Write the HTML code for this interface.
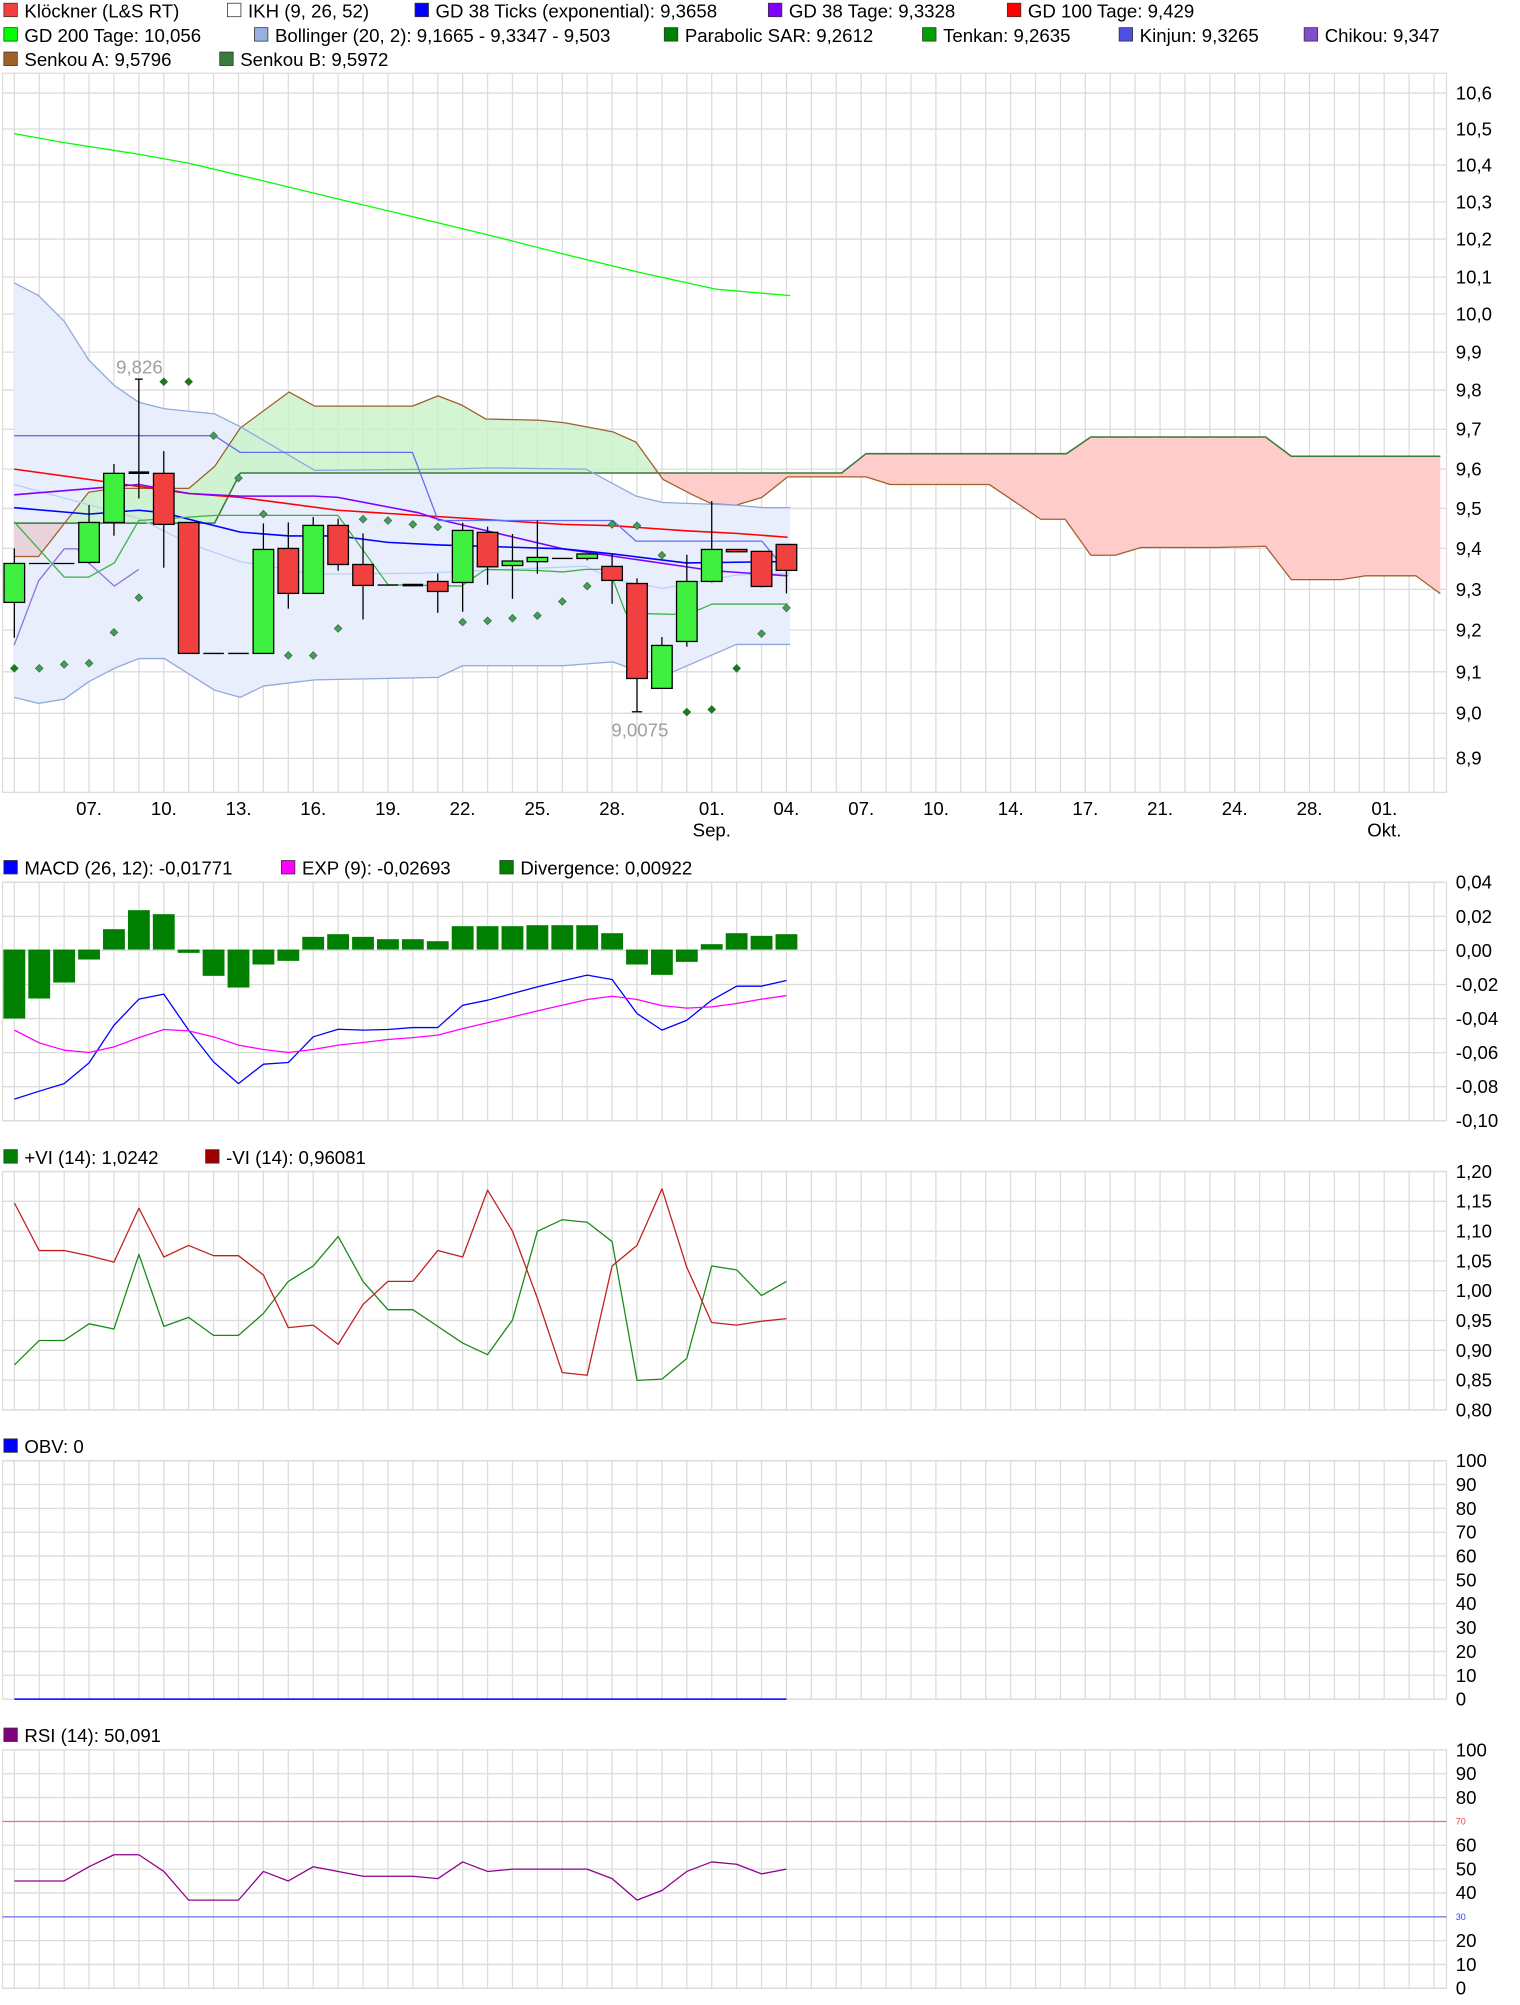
<!DOCTYPE html>
<html><head><meta charset="utf-8"><style>
html,body{margin:0;padding:0;background:#fff;}
svg{display:block;}
text{font-family:"Liberation Sans",sans-serif;font-size:14.5px;fill:#000;}
</style></head><body>
<svg id="s" xmlns="http://www.w3.org/2000/svg" width="1520" height="2005" viewBox="0 0 1183 1560" preserveAspectRatio="none">
<g id="grid"></g>
<g id="draw"></g>
<g id="txt">
<rect x="3" y="2.5" width="10.5" height="10.5" fill="#f04040" stroke="#333" stroke-width=".6"/><text x="19" y="13.5">Klöckner (L&amp;S RT)</text>
<rect x="177" y="2.5" width="10.5" height="10.5" fill="#fff" stroke="#333" stroke-width=".6"/><text x="193" y="13.5">IKH (9, 26, 52)</text>
<rect x="323" y="2.5" width="10.5" height="10.5" fill="#0000ff" stroke="#333" stroke-width=".6"/><text x="339" y="13.5">GD 38 Ticks (exponential): 9,3658</text>
<rect x="598" y="2.5" width="10.5" height="10.5" fill="#8000ff" stroke="#333" stroke-width=".6"/><text x="614" y="13.5">GD 38 Tage: 9,3328</text>
<rect x="784" y="2.5" width="10.5" height="10.5" fill="#ff0000" stroke="#333" stroke-width=".6"/><text x="800" y="13.5">GD 100 Tage: 9,429</text>
<rect x="3" y="21.5" width="10.5" height="10.5" fill="#00ff00" stroke="#333" stroke-width=".6"/><text x="19" y="32.5">GD 200 Tage: 10,056</text>
<rect x="198" y="21.5" width="10.5" height="10.5" fill="#98b0e0" stroke="#333" stroke-width=".6"/><text x="214" y="32.5">Bollinger (20, 2): 9,1665 - 9,3347 - 9,503</text>
<rect x="517" y="21.5" width="10.5" height="10.5" fill="#008000" stroke="#333" stroke-width=".6"/><text x="533" y="32.5">Parabolic SAR: 9,2612</text>
<rect x="718" y="21.5" width="10.5" height="10.5" fill="#00a000" stroke="#333" stroke-width=".6"/><text x="734" y="32.5">Tenkan: 9,2635</text>
<rect x="871" y="21.5" width="10.5" height="10.5" fill="#5050e0" stroke="#333" stroke-width=".6"/><text x="887" y="32.5">Kinjun: 9,3265</text>
<rect x="1015" y="21.5" width="10.5" height="10.5" fill="#8050c8" stroke="#333" stroke-width=".6"/><text x="1031" y="32.5">Chikou: 9,347</text>
<rect x="3" y="40.5" width="10.5" height="10.5" fill="#a0602a" stroke="#333" stroke-width=".6"/><text x="19" y="51.5">Senkou A: 9,5796</text>
<rect x="171" y="40.5" width="10.5" height="10.5" fill="#3a7a3a" stroke="#333" stroke-width=".6"/><text x="187" y="51.5">Senkou B: 9,5972</text>

<rect x="3" y="669.5" width="10.5" height="10.5" fill="#0000ff" stroke="#333" stroke-width=".6"/><text x="19" y="680.5">MACD (26, 12): -0,01771</text>
<rect x="219" y="669.5" width="10.5" height="10.5" fill="#ff00ff" stroke="#333" stroke-width=".6"/><text x="235" y="680.5">EXP (9): -0,02693</text>
<rect x="389" y="669.5" width="10.5" height="10.5" fill="#008000" stroke="#333" stroke-width=".6"/><text x="405" y="680.5">Divergence: 0,00922</text>

<rect x="3" y="894.5" width="10.5" height="10.5" fill="#008000" stroke="#333" stroke-width=".6"/><text x="19" y="905.5">+VI (14): 1,0242</text>
<rect x="160" y="894.5" width="10.5" height="10.5" fill="#a00000" stroke="#333" stroke-width=".6"/><text x="176" y="905.5">-VI (14): 0,96081</text>

<rect x="3" y="1119.5" width="10.5" height="10.5" fill="#0000ff" stroke="#333" stroke-width=".6"/><text x="19" y="1130.5">OBV: 0</text>
<rect x="3" y="1344.5" width="10.5" height="10.5" fill="#800080" stroke="#333" stroke-width=".6"/><text x="19" y="1355.5">RSI (14): 50,091</text>

<g>
<text x="1133" y="77.5">10,6</text><text x="1133" y="105.5">10,5</text><text x="1133" y="133.5">10,4</text><text x="1133" y="162.3">10,3</text><text x="1133" y="191">10,2</text><text x="1133" y="220.7">10,1</text><text x="1133" y="249.5">10,0</text><text x="1133" y="279">9,9</text><text x="1133" y="308.6">9,8</text><text x="1133" y="339">9,7</text><text x="1133" y="370">9,6</text><text x="1133" y="400.7">9,5</text><text x="1133" y="431.8">9,4</text><text x="1133" y="463.7">9,3</text><text x="1133" y="495.4">9,2</text><text x="1133" y="527.8">9,1</text><text x="1133" y="560">9,0</text><text x="1133" y="595">8,9</text>
</g>
<g text-anchor="middle">
<text x="69.3" y="634">07.</text><text x="127.5" y="634">10.</text><text x="185.7" y="634">13.</text><text x="243.8" y="634">16.</text><text x="302" y="634">19.</text><text x="360" y="634">22.</text><text x="418.3" y="634">25.</text><text x="476.5" y="634">28.</text><text x="554" y="634">01.</text><text x="554" y="651">Sep.</text><text x="612" y="634">04.</text><text x="670.3" y="634">07.</text><text x="728.5" y="634">10.</text><text x="786.6" y="634">14.</text><text x="844.7" y="634">17.</text><text x="902.9" y="634">21.</text><text x="961" y="634">24.</text><text x="1019.2" y="634">28.</text><text x="1077.4" y="634">01.</text><text x="1077.4" y="651">Okt.</text>
</g>
<g>
<text x="1133" y="691.5">0,04</text><text x="1133" y="718">0,02</text><text x="1133" y="744.5">0,00</text><text x="1133" y="771">-0,02</text><text x="1133" y="797.5">-0,04</text><text x="1133" y="824">-0,06</text><text x="1133" y="850.5">-0,08</text><text x="1133" y="877">-0,10</text>
</g>
<g>
<text x="1133" y="916.5">1,20</text><text x="1133" y="939.7">1,15</text><text x="1133" y="962.9">1,10</text><text x="1133" y="986.1">1,05</text><text x="1133" y="1009.3">1,00</text><text x="1133" y="1032.5">0,95</text><text x="1133" y="1055.7">0,90</text><text x="1133" y="1078.9">0,85</text><text x="1133" y="1102">0,80</text>
</g>
<g>
<text x="1133" y="1141.5">100</text><text x="1133" y="1160">90</text><text x="1133" y="1178.6">80</text><text x="1133" y="1197.2">70</text><text x="1133" y="1215.7">60</text><text x="1133" y="1234.2">50</text><text x="1133" y="1252.8">40</text><text x="1133" y="1271.4">30</text><text x="1133" y="1290">20</text><text x="1133" y="1308.5">10</text><text x="1133" y="1327">0</text>
</g>
<g>
<text x="1133" y="1366.5">100</text><text x="1133" y="1385">90</text><text x="1133" y="1403.6">80</text><text x="1133" y="1440.7">60</text><text x="1133" y="1459.2">50</text><text x="1133" y="1477.7">40</text><text x="1133" y="1514.9">20</text><text x="1133" y="1533.4">10</text><text x="1133" y="1552">0</text>
<text x="1133" y="1419.5" style="font-size:7px;fill:#f04040">70</text>
<text x="1133" y="1494" style="font-size:7px;fill:#4040f0">30</text>
</g>
</g>
</svg>
<script>
(function(){
var NS="http://www.w3.org/2000/svg";
var G=document.getElementById("grid"),D=document.getElementById("draw");
function el(p,tag,a){var e=document.createElementNS(NS,tag);for(var k in a)e.setAttribute(k,a[k]);p.appendChild(e);return e;}
function X(i){return 11.15+19.385*i;}
var L=2,R=1125.8;
function panel(top,bot,hl){
  for(var i=0;i<=57;i++){var x=X(i);if(x<R)el(G,"line",{x1:x,x2:x,y1:top,y2:bot,stroke:"#dcdcdc","stroke-width":1});}
  hl.forEach(function(y){el(G,"line",{x1:L,x2:R,y1:y,y2:y,stroke:"#dcdcdc","stroke-width":1});});
  el(G,"rect",{x:L,y:top,width:R-L,height:bot-top,fill:"none",stroke:"#dcdcdc","stroke-width":1});
}
function even(top,bot,n){var a=[];for(var k=0;k<n;k++)a.push(top+(bot-top)*k/(n-1));return a;}
panel(57,616.5,[72.4,100.4,128.4,157.2,186,215.6,244.4,274,303.5,334,365,395.6,426.7,458.6,490.3,522.7,555,590]);
panel(686.5,872,even(686.5,872,8));
panel(911.5,1097,even(911.5,1097,9));
panel(1136.5,1322,even(1136.5,1322,11));
panel(1361.5,1547,even(1361.5,1547,11));
function pts(a){return a.map(function(p){return p[0].toFixed(1)+","+p[1].toFixed(1);}).join(" ");}
function idx(a){return a.map(function(v,i){return [X(i),v];});}
function line(a,c,w){el(D,"polyline",{points:pts(a),fill:"none",stroke:c,"stroke-width":w||1,"stroke-linejoin":"round"});}
function poly(a,f,o){el(D,"polygon",{points:pts(a),fill:f,"fill-opacity":o||1,stroke:"none"});}

var bu=[[11,220],[30,230],[50,250],[69,280],[89,300],[108,313],[128,318],[167,322],[187,332],[245,366],[345,365],[380,364],[456,365],[495,386],[516,391],[573,393],[593,395],[615,395]];
var bl=[[11,542.6],[30,547.3],[50,544],[69,530.5],[89,520],[108,512.4],[128,512.4],[167,537],[187,542.6],[205,533.8],[245,529],[294,528],[341,527],[360,518],[438,518],[477,515],[498,522.7],[524,522.7],[573,501.4],[615,501.4]];
poly(bu.concat(bl.slice().reverse()),"#e8eefb");
var A=[[11,433],[30,433],[69,383],[89,380],[147,380],[167,363],[187,333],[225,305],[245,316],[321,316],[341,308],[359,315],[378,326],[420,327],[440,329],[477,336],[495,344],[516,373],[539,385],[554,392],[573,393],[593,387],[613,371],[655,371],[674,371],[693,377],[770,377],[810,404],[829,404],[849,432],[868,432],[888,426],[946,426],[985,425],[1005,451],[1044,451],[1063,448],[1102,448],[1121,462]];
var B=[[11,407],[167,407],[187,368],[655,368],[674,353],[830,353],[849,340],[985,340],[1005,355],[1121,355]];
function interp(arr,x){for(var i=0;i<arr.length-1;i++){if(x>=arr[i][0]&&x<=arr[i+1][0]){var t=(x-arr[i][0])/(arr[i+1][0]-arr[i][0]);return arr[i][1]+t*(arr[i+1][1]-arr[i][1]);}}return arr[arr.length-1][1];}
function seg(x0,x1,f,o){var xs=[];A.concat(B).forEach(function(p){if(p[0]>x0&&p[0]<x1)xs.push(p[0]);});xs.push(x0,x1);xs.sort(function(a,b){return a-b;});
 var top=xs.map(function(x){return [x,interp(A,x)];}),bot=xs.map(function(x){return [x,interp(B,x)];}).reverse();poly(top.concat(bot),f,o);}
seg(11,50,"#e8c8d0",0.75);seg(50,509,"#c8f2c8",0.8);seg(509,1121,"#ffcccc",1);
line(B,"#3a7a3a",1.2);line(A,"#a0602a",1);
line(bu,"#90a8e0",1);line(bl,"#90a8e0",1);
line([[11,377],[108,403.3],[147,422.8],[187,437],[245,446.7],[326,446],[456,440.5],[477,451],[516,457.8],[573,447.4],[615,446]],"#b8d0f8",1);
line([[11,104],[50,111],[108,120],[147,127],[206,141],[264,155],[323,169],[381,183],[440,198],[498,212],[557,225],[615,230]],"#00ff00",1);
line([[11,365],[69,373],[147,384],[187,387],[263,397],[326,401],[438,408],[477,409],[534,413],[573,415],[613,418]],"#ff0000",1.2);
line([[11,385],[108,377],[147,384],[187,386],[245,386],[263,387],[326,399],[341,404],[438,427],[534,441],[554,444],[613,448]],"#8000ff",1.2);
line([[11,395],[69,400],[108,397],[128,399],[147,404],[187,414],[225,417],[263,417],[302,422],[341,424],[438,427],[477,431],[534,438],[604,437],[615,438]],"#0000ff",1.2);
line([[11,339],[167,339],[187,352],[321,352],[341,405],[477,405],[495,421],[593,421],[606,437],[615,440]],"#6070f0",1);
line([[11,406],[30,427],[50,449],[69,449],[89,438],[108,405],[167,401],[263,401],[302,455],[359,456],[378,443],[420,444],[438,445],[456,443],[474,443],[487,477],[524,478],[545,474],[554,470],[613,470]],"#3cb043",1);
line([[11,502],[30,452],[50,427],[60,427],[69,438],[89,456],[108,443]],"#9070d8",1);
var C=[["g",438.4,468.7,426.7,496.2],["d",438.4],["d",438.4],["g",406.5,437.6,393,438.4],["g",368.3,406.5,361,416.8],["D",367.8,0,295,387.8],["r",368.3,408,351,441.7],["r",406.5,508.4],["d",508.4],["d",508.4],["g",427.5,508.4,407.2,508.4],["r",426.7,461.7,406.5,473.6],["g",408.8,461.7,402.3,461.7],["r",408.8,439.2,403.6,444.1],["r",439.2,455.5,415,482],["d",455.2],["D",455.2],["r",452.4,460.2,446.2,476.8],["g",412.7,453.2,406.7,476],["r",414.2,441,409.8,455],["g",436.5,440,415.5,465.9],["g",433.7,437,405,446.4],["d",434.5],["g",431,434.5,431,436],["r",440.7,451.6,431,469.8],["r",454,527.9,450,553.8],["g",502.2,535.6,495.7,535.6],["g",452.4,499.1,431.6,503.2],["g",427.5,452.4,389.9,453.2],["r",427.5,429.3],["r",429,456.3,429,457],["r",423.6,443.8,423.6,461.7]];
C.forEach(function(c,i){var x=X(i);
 if(c[0]=="d"||c[0]=="D"){ if(c[3])el(D,"line",{x1:x,x2:x,y1:c[3],y2:c[4],stroke:"#000","stroke-width":1});
   el(D,"line",{x1:x-8,x2:x+8,y1:c[1],y2:c[1],stroke:"#000","stroke-width":c[0]=="D"?2:1});return;}
 if(c[3]!==undefined)el(D,"line",{x1:x,x2:x,y1:c[3],y2:c[4],stroke:"#000","stroke-width":1});
 el(D,"rect",{x:x-8,y:c[1],width:16,height:Math.max(c[2]-c[1],1.5),fill:c[0]=="g"?"#40f040":"#f04040",stroke:"#000","stroke-width":1});
});
el(D,"line",{x1:X(5)-3,x2:X(5)+3,y1:295,y2:295,stroke:"#000","stroke-width":1});
el(D,"line",{x1:X(25)-4,x2:X(25)+4,y1:553.8,y2:553.8,stroke:"#000","stroke-width":1});
var S=[520,520,517,516,492,465,297,297,339,372,400,510,510,489,404,405,408,410,484,483,481,479,468,456,408,409,432,554,552,520,493,473];
S.forEach(function(y,i){var x=X(i);var dark=(i>=6&&i<=7)||(i>=27&&i<=29)||i==0;
 el(D,"polygon",{points:(x)+","+(y-3)+" "+(x+3)+","+y+" "+x+","+(y+3)+" "+(x-3)+","+y,fill:dark?"#1a7a1a":"#4a9a5a",stroke:"#2a6a3a","stroke-width":.5});});
var t1=el(D,"text",{x:108.5,y:290.5,"text-anchor":"middle",style:"fill:#a0a0a0"});t1.textContent="9,826";
var t2=el(D,"text",{x:498,y:573,"text-anchor":"middle",style:"fill:#a0a0a0"});t2.textContent="9,0075";

function mz(zy){return 607+zy*0.2594;}
var dv=[715,655,607,538,447,390,402,518,587,622,553,542,470,462,470,477,477,483,438,438,438,435,435,435,459,553,584,545,492,459,467,462];
dv.forEach(function(z,i){var y=mz(z),y0=738.8;el(D,"rect",{x:X(i)-8.5,y:Math.min(y,y0),width:17,height:Math.max(Math.abs(y-y0),1.5),fill:"#007f00"});});
var mb=[957,933,910,848,735,657,642,750,845,910,852,847,770,747,750,748,742,742,675,660,640,620,602,585,598,700,750,720,660,618,618,601];
var me=[750,788,810,817,800,772,748,752,770,795,808,817,808,795,787,778,772,765,745,728,710,692,675,658,648,658,676,684,680,670,657,646];
line(idx(mb.map(mz)),"#0000ff",1);line(idx(me.map(mz)),"#ff00ff",1);
line(idx([1062,1043,1043,1030,1034,976,1032,1025,1039,1039,1022,997,985,962,997,1019,1019,1032,1045,1054,1027,958,949,951,966,1074,1073,1057,985,988,1008,997]),"#1a8a1a",1);
line(idx([936,973,973,977,982,940,978,969,977,977,992,1033,1031,1046,1015,997,997,973,978,926,958,1010,1068,1070,985,969,925,986,1029,1031,1028,1026]),"#c02020",1);
line([[X(0),1322],[X(31),1322]],"#0000ff",1.2);
el(D,"line",{x1:L,x2:R,y1:1417.2,y2:1417.2,stroke:"#f07070","stroke-width":1});
el(D,"line",{x1:L,x2:R,y1:1491.4,y2:1491.4,stroke:"#7070f0","stroke-width":1});
var rs=[45,45,45,51,56,56,49,37,37,37,49,45,51,49,47,47,47,46,53,49,50,50,50,50,46,37,41,49,53,52,48,50];
line(idx(rs.map(function(v){return 1547-v*1.855;})),"#900090",1);
})();
</script>
</body></html>
